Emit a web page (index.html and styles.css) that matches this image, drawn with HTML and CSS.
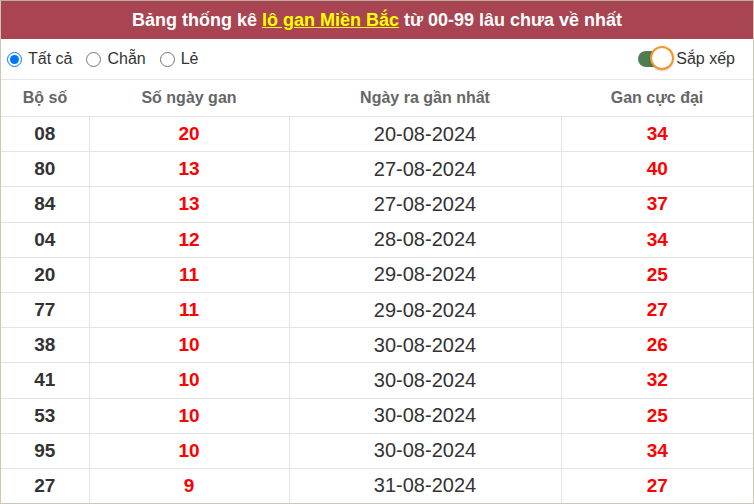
FILE: index.html
```html
<!DOCTYPE html>
<html lang="vi">
<head>
<meta charset="utf-8">
<link rel="stylesheet" href="styles.css">
</head>
<body>
<div class="box">
  <div class="title">Bảng thống kê <a class="hl">lô gan Miền Bắc</a> từ 00-99 lâu chưa về nhất</div>
  <div class="filters">
    <div class="radios">
      <label class="radio"><span class="dot on"></span>Tất cả</label>
      <label class="radio"><span class="dot"></span>Chẵn</label>
      <label class="radio"><span class="dot"></span>Lẻ</label>
    </div>
    <div class="sort">
      <span class="toggle"><span class="knob"></span></span>
      <span>Sắp xếp</span>
    </div>
  </div>
  <table class="tbl">
    <thead>
      <tr><th class="c1">Bộ số</th><th class="c2">Số ngày gan</th><th class="c3">Ngày ra gần nhất</th><th class="c4">Gan cực đại</th></tr>
    </thead>
    <tbody>
      <tr><td class="num">08</td><td class="red">20</td><td class="date">20-08-2024</td><td class="red">34</td></tr>
      <tr><td class="num">80</td><td class="red">13</td><td class="date">27-08-2024</td><td class="red">40</td></tr>
      <tr><td class="num">84</td><td class="red">13</td><td class="date">27-08-2024</td><td class="red">37</td></tr>
      <tr><td class="num">04</td><td class="red">12</td><td class="date">28-08-2024</td><td class="red">34</td></tr>
      <tr><td class="num">20</td><td class="red">11</td><td class="date">29-08-2024</td><td class="red">25</td></tr>
      <tr><td class="num">77</td><td class="red">11</td><td class="date">29-08-2024</td><td class="red">27</td></tr>
      <tr><td class="num">38</td><td class="red">10</td><td class="date">30-08-2024</td><td class="red">26</td></tr>
      <tr><td class="num">41</td><td class="red">10</td><td class="date">30-08-2024</td><td class="red">32</td></tr>
      <tr><td class="num">53</td><td class="red">10</td><td class="date">30-08-2024</td><td class="red">25</td></tr>
      <tr><td class="num">95</td><td class="red">10</td><td class="date">30-08-2024</td><td class="red">34</td></tr>
      <tr><td class="num">27</td><td class="red">9</td><td class="date">31-08-2024</td><td class="red">27</td></tr>
    </tbody>
  </table>
</div>
</body>
</html>
```
FILE: styles.css
```css
html, body {
  margin: 0;
  padding: 0;
  background: #fff;
}
body {
  font-family: "Liberation Sans", Arial, sans-serif;
  color: #333;
}
.box {
  width: 754px;
  height: 504px;
  box-sizing: border-box;
  border: 1px solid #cfc6b8;
  border-top-color: #b9ad9e;
  overflow: hidden;
}
.title {
  height: 38px;
  background: #a94552;
  color: #fff;
  font-weight: bold;
  font-size: 18px;
  display: flex;
  align-items: center;
  justify-content: center;
  white-space: pre;
}
.hl {
  color: #ffff00;
  text-decoration: underline;
}
.filters {
  height: 40px;
  display: flex;
  align-items: center;
  justify-content: space-between;
  padding: 0 18px 0 6px;
  border-bottom: 1px solid #e6e6e6;
  font-size: 16px;
  color: #333;
}
.radios {
  display: flex;
  gap: 14px;
}
.radio {
  display: flex;
  align-items: center;
  gap: 6px;
}
.dot {
  width: 15px;
  height: 15px;
  border: 1px solid #767676;
  border-radius: 50%;
  box-sizing: border-box;
  background: #fff;
  position: relative;
}
.dot.on {
  border: 1px solid #0075ff;
}
.dot.on::after {
  content: "";
  position: absolute;
  left: 2px;
  top: 2px;
  width: 9px;
  height: 9px;
  border-radius: 50%;
  background: #0075ff;
}
.sort {
  display: flex;
  align-items: center;
  gap: 4px;
}
.toggle {
  width: 32px;
  height: 16px;
  border-radius: 8px;
  background: #4e7d52;
  position: relative;
  display: inline-block;
  margin-right: 2px;
}
.knob {
  position: absolute;
  right: -4px;
  top: -5px;
  width: 24px;
  height: 24px;
  border-radius: 50%;
  background: #fff;
  border: 2px solid #f5962a;
  box-sizing: border-box;
  box-shadow: 0 1px 2px rgba(0,0,0,0.2);
}
.tbl {
  width: 100%;
  border-collapse: collapse;
  table-layout: fixed;
}
.tbl th {
  height: 36px;
  font-size: 16px;
  font-weight: bold;
  color: #666;
  text-align: center;
  padding: 0;
  border-bottom: 1px solid #e3e3e3;
}
.c1 { width: 88px; }
.c2 { width: 200px; }
.c3 { width: 272px; }
.tbl tbody tr {
  height: 35.2px;
}
.tbl td {
  padding: 0;
  text-align: center;
  font-size: 19px;
  border: 1px solid #e3e3e3;
  border-top: none;
}
.tbl td:first-child { border-left: none; }
.tbl td:last-child { border-right: none; }
.num {
  font-weight: bold;
  color: #333;
}
.red {
  font-weight: bold;
  color: #ff0000;
}
.tbl .date {
  color: #333;
  font-size: 20px;
}
```
